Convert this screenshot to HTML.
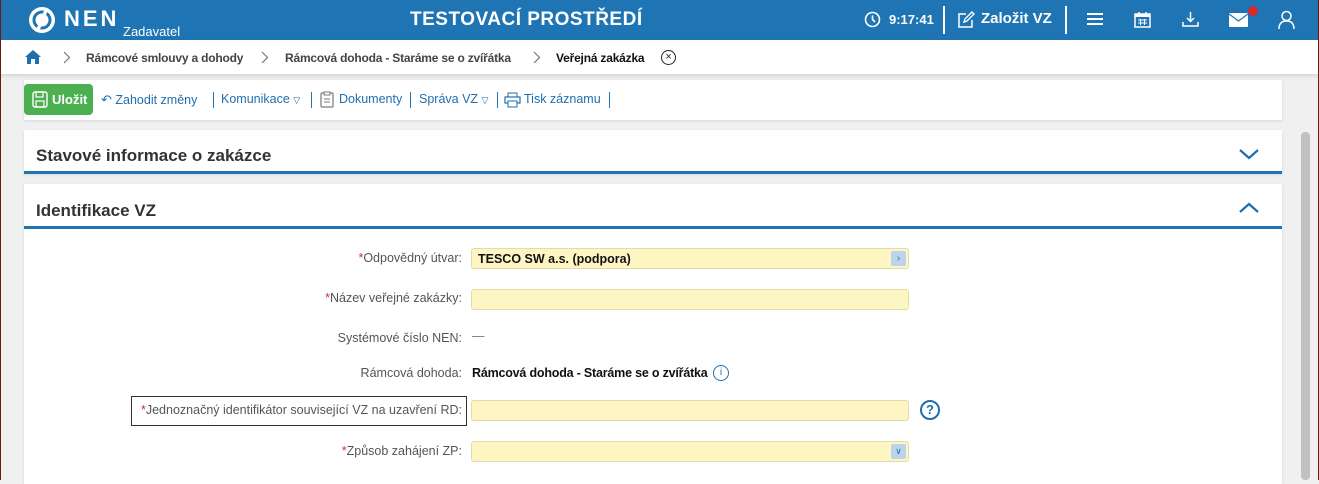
<!DOCTYPE html>
<html><head><meta charset="utf-8"><style>
*{box-sizing:border-box;margin:0;padding:0}
body{width:1319px;height:480px;overflow:hidden;background:#f0f0f0;font-family:"Liberation Sans",sans-serif;position:relative;color:#222}
.a{position:absolute}
.hdr{left:0;top:0;width:1319px;height:40px;background:#1f74b3;color:#fff}
.bc{left:0;top:40px;width:1319px;height:34px;background:#fff;box-shadow:0 2px 4px rgba(0,0,0,.12);font-size:12px;font-weight:bold;color:#444;letter-spacing:-.2px}
.panel{background:#fff;left:24px;width:1258px;box-shadow:0 1px 3px rgba(0,0,0,.1)}
.tb{font-size:12.5px;color:#1f6fb0}
.sep{width:1px;height:16px;background:#1f74b3;top:92px}
.h2{font-size:17px;font-weight:bold;color:#333}
.lbl{font-size:12.5px;color:#555;text-align:right;width:340px;left:122px}
.req{color:#c33}
.inp{left:471px;width:438px;height:21px;background:#fdf6c3;border:1px solid #e3dca8;border-radius:3px}
.btn{right:2px;top:2px;width:15px;height:15px;background:#bcd3ee;border-radius:2px;color:#1f6fb0;font-size:10px;text-align:center;line-height:15px}
.chev{top:11px}
</style></head><body>
<div class="a hdr">
 <svg class="a" style="left:27px;top:5px" width="30" height="30" viewBox="0 0 30 30"><circle cx="15" cy="15" r="13" fill="#fff"/><circle cx="15" cy="15" r="8" fill="none" stroke="#1f74b3" stroke-width="3"/><path d="M20 3 L10 27" stroke="#fff" stroke-width="3.5"/></svg>
 <div class="a" style="left:64px;top:6px;font-size:22px;font-weight:bold;letter-spacing:3px">NEN</div>
 <div class="a" style="left:123px;top:24px;font-size:13px">Zadavatel</div>
 <div class="a" style="left:410px;top:9px;font-size:19px;font-weight:bold;letter-spacing:.5px">TESTOVACÍ PROSTŘEDÍ</div>
 <svg class="a" style="left:864px;top:11px" width="17" height="17" viewBox="0 0 17 17"><circle cx="8.5" cy="8.5" r="7" fill="none" stroke="#fff" stroke-width="1.6"/><path d="M8.5 4.5V8.5L11 11" stroke="#fff" stroke-width="1.6" fill="none"/></svg>
 <div class="a" style="left:889px;top:12px;font-size:13px;font-weight:bold">9:17:41</div>
 <div class="a" style="left:943px;top:6px;width:2px;height:28px;background:#fff"></div>
 <svg class="a" style="left:957px;top:11px" width="18" height="18" viewBox="0 0 18 18"><path d="M9 3H2v13h13V9" fill="none" stroke="#fff" stroke-width="1.5"/><path d="M7 11l1-3 7-7 2 2-7 7z" fill="none" stroke="#fff" stroke-width="1.4"/></svg>
 <div class="a" style="left:981px;top:10px;font-size:15px;font-weight:bold">Založit VZ</div>
 <div class="a" style="left:1065px;top:6px;width:2px;height:28px;background:#fff"></div>
 <div class="a" style="left:1087px;top:13px;width:16px;height:2px;background:#fff;box-shadow:0 5px 0 #fff,0 10px 0 #fff"></div>
 <svg class="a" style="left:1134px;top:11px" width="17" height="17" viewBox="0 0 17 17"><rect x="1" y="3" width="15" height="13" fill="none" stroke="#fff" stroke-width="1.5"/><rect x="1" y="3" width="15" height="3" fill="#fff"/><path d="M5 1v4M12 1v4" stroke="#fff" stroke-width="1.5"/><path d="M4 9h9M4 12h9M6.5 8v6M10.5 8v6" stroke="#fff" stroke-width="1"/></svg>
 <svg class="a" style="left:1182px;top:11px" width="17" height="17" viewBox="0 0 17 17"><path d="M8.5 1v9M5 7l3.5 3.5L12 7M1 11v4h15v-4" fill="none" stroke="#fff" stroke-width="1.5"/></svg>
 <svg class="a" style="left:1229px;top:13px" width="19" height="14" viewBox="0 0 19 14"><rect x="0" y="0" width="19" height="14" rx="1" fill="#fff"/><path d="M0 1l9.5 7L19 1" fill="none" stroke="#1f74b3" stroke-width="1.2"/></svg>
 <div class="a" style="left:1248px;top:6px;width:10px;height:10px;border-radius:50%;background:#d62b2b"></div>
 <svg class="a" style="left:1278px;top:10px" width="17" height="19" viewBox="0 0 17 19"><circle cx="8.5" cy="6" r="4.5" fill="none" stroke="#fff" stroke-width="1.5"/><path d="M1 19Q1 11 8.5 11Q16 11 16 19" fill="none" stroke="#fff" stroke-width="1.5"/></svg>
</div>
<div class="a bc">
 <svg class="a" style="left:24px;top:9px" width="18" height="16" viewBox="0 0 18 16"><path d="M9 1L1 8h2v7h4v-5h4v5h4V8h2z" fill="#1f6fb0"/></svg>
 <svg class="a chev" style="left:63px" width="8" height="13" viewBox="0 0 8 13"><path d="M1 1l5.5 5.5L1 12" fill="none" stroke="#777" stroke-width="1.2"/></svg>
 <div class="a" style="left:86px;top:11px">Rámcové smlouvy a dohody</div>
 <svg class="a chev" style="left:261px" width="8" height="13" viewBox="0 0 8 13"><path d="M1 1l5.5 5.5L1 12" fill="none" stroke="#777" stroke-width="1.2"/></svg>
 <div class="a" style="left:285px;top:11px">Rámcová dohoda - Staráme se o zvířátka</div>
 <svg class="a chev" style="left:533px" width="8" height="13" viewBox="0 0 8 13"><path d="M1 1l5.5 5.5L1 12" fill="none" stroke="#777" stroke-width="1.2"/></svg>
 <div class="a" style="left:556px;top:11px;color:#111">Veřejná zakázka</div>
 <div class="a" style="left:661px;top:10px;width:15px;height:15px;border:1.3px solid #222;border-radius:50%;font-size:11px;text-align:center;line-height:13px;color:#222;font-weight:normal">×</div>
</div>
<div class="a panel" style="top:80px;height:40px"></div>
<div class="a" style="left:24px;top:84px;width:69px;height:31px;background:#4caf50;border-radius:4px;color:#fff;font-size:13px;font-weight:bold">
 <svg class="a" style="left:8px;top:7px" width="16" height="17" viewBox="0 0 16 17"><rect x="1" y="1" width="14" height="15" rx="2" fill="none" stroke="#fff" stroke-width="1.4"/><rect x="4" y="1" width="7" height="5" fill="none" stroke="#fff" stroke-width="1.2"/><rect x="4" y="10" width="8" height="6" fill="none" stroke="#fff" stroke-width="1.2"/></svg>
 <div class="a" style="left:28px;top:8px">Uložit</div>
</div>
<div class="a tb" style="left:101px;top:92px"><span style="font-size:13px">↶</span> Zahodit změny</div>
<div class="a sep" style="left:213px"></div>
<div class="a tb" style="left:221px;top:92px">Komunikace <span style="font-size:9px">▽</span></div>
<div class="a sep" style="left:311px"></div>
<svg class="a" style="left:320px;top:91px" width="14" height="17" viewBox="0 0 14 17"><rect x="1" y="2" width="12" height="14" rx="1" fill="none" stroke="#777" stroke-width="1.2"/><rect x="4" y="1" width="6" height="3" fill="#fff" stroke="#777"/><path d="M4 8h6M4 11h6" stroke="#777"/></svg>
<div class="a tb" style="left:339px;top:92px">Dokumenty</div>
<div class="a sep" style="left:410px"></div>
<div class="a tb" style="left:419px;top:92px">Správa VZ <span style="font-size:9px">▽</span></div>
<div class="a sep" style="left:497px"></div>
<svg class="a" style="left:504px;top:92px" width="17" height="16" viewBox="0 0 17 16"><rect x="4" y="1" width="9" height="4" fill="none" stroke="#1f6fb0"/><rect x="1" y="5" width="15" height="6" fill="none" stroke="#1f6fb0" stroke-width="1.2"/><rect x="4" y="9" width="9" height="6" fill="#fff" stroke="#1f6fb0"/></svg>
<div class="a tb" style="left:524px;top:92px">Tisk záznamu</div>
<div class="a sep" style="left:609px"></div>

<div class="a panel" style="top:130px;height:44px;border-bottom:3px solid #1f74b3"></div>
<div class="a h2" style="left:36px;top:146px">Stavové informace o zakázce</div>
<svg class="a" style="left:1238px;top:148px" width="22" height="12" viewBox="0 0 22 12"><path d="M2 2l9 8 9-8" fill="none" stroke="#1f6fb0" stroke-width="2.2"/></svg>

<div class="a panel" style="top:184px;height:300px"></div>
<div class="a" style="left:24px;top:226px;width:1258px;height:3px;background:#1f74b3"></div>
<div class="a h2" style="left:36px;top:201px">Identifikace VZ</div>
<svg class="a" style="left:1238px;top:202px" width="22" height="12" viewBox="0 0 22 12"><path d="M2 10l9-8 9 8" fill="none" stroke="#1f6fb0" stroke-width="2.2"/></svg>

<div class="a lbl" style="top:251px"><span class="req">*</span>Odpovědný útvar:</div>
<div class="a inp" style="top:248px"><div class="a" style="left:6px;top:3px;font-size:12.5px;font-weight:bold;color:#111">TESCO SW a.s. (podpora)</div><div class="a btn">›</div></div>
<div class="a lbl" style="top:291px"><span class="req">*</span>Název veřejné zakázky:</div>
<div class="a inp" style="top:289px"></div>
<div class="a lbl" style="top:331px">Systémové číslo NEN:</div>
<div class="a" style="left:472px;top:329px;font-size:12.5px;color:#777">—</div>
<div class="a lbl" style="top:366px">Rámcová dohoda:</div>
<div class="a" style="left:472px;top:366px;font-size:12.5px;font-weight:bold;color:#111;letter-spacing:-.2px">Rámcová dohoda - Staráme se o zvířátka</div>
<div class="a" style="left:713px;top:365px;width:16px;height:16px;border:1.3px solid #1f6fb0;border-radius:50%;color:#1f6fb0;font-size:10px;text-align:center;line-height:14px;background:#fff">i</div>
<div class="a" style="left:131px;top:396px;width:336px;height:30px;border:1px solid #333"></div>
<div class="a lbl" style="top:403px;left:122px"><span class="req">*</span>Jednoznačný identifikátor související VZ na uzavření RD:</div>
<div class="a inp" style="top:400px"></div>
<div class="a" style="left:920px;top:400px;width:20px;height:20px;border:2px solid #1f6fb0;border-radius:50%;color:#1f6fb0;font-size:13px;font-weight:bold;text-align:center;line-height:16px">?</div>
<div class="a lbl" style="top:444px"><span class="req">*</span>Způsob zahájení ZP:</div>
<div class="a inp" style="top:441px"><div class="a btn" style="font-size:9px">∨</div></div>

<div class="a" style="left:1301px;top:132px;width:9px;height:348px;background:#c1c1c1;border-radius:4px"></div>
<div class="a" style="left:0;top:0;width:1px;height:480px;background:#6b1a12"></div>
<div class="a" style="left:1318px;top:0;width:1px;height:480px;background:#6b1a12"></div>
</body></html>
